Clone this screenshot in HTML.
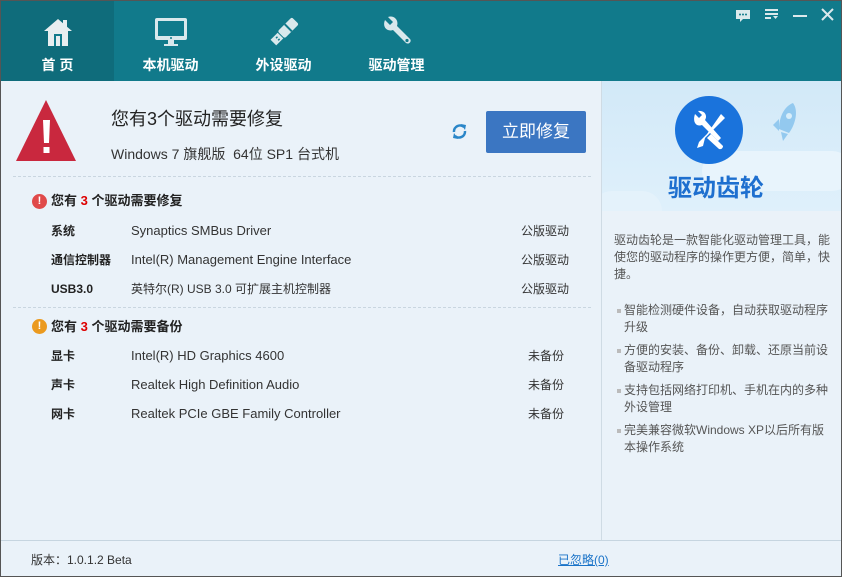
<!DOCTYPE html>
<html><head><meta charset="utf-8"><style>
*{margin:0;padding:0;box-sizing:border-box}
body{width:842px;height:577px;overflow:hidden;font-family:"Liberation Sans","Noto Sans CJK SC",sans-serif;background:#555}
#w{position:absolute;left:1px;top:1px;width:840px;height:575px;background:#eaf2f9;overflow:hidden}
#hd{position:absolute;left:0;top:0;width:840px;height:80px;background:#117a8b}
.tab{position:absolute;top:0;width:113px;height:80px;color:#fff;text-align:center;font-size:14px;font-weight:bold}
.tab span{position:absolute;left:0;right:0;top:54px}
.tab svg{position:absolute;left:50%;top:15px;transform:translateX(-50%)}
.a{position:absolute;white-space:nowrap}
.b{font-weight:bold;color:#222;line-height:18px}
.t{font-size:13px;color:#333;line-height:16px}
.l{font-size:12px;font-weight:bold;color:#222;line-height:16px}
.d{position:absolute;left:12px;width:578px;border-top:1px dashed #c9d6e0}
.r{font-size:12px;color:#555;line-height:17px}
.bl{position:absolute;left:616px;width:4px;height:4px;background:#bbb}
</style></head><body><div id="w">
<div id="hd">
 <div class="tab" style="left:0;background:#0f6c7b"><svg width="32" height="32" viewBox="0 0 32 32"><path d="M16 3 L2 15 H6 V30 H26 V15 H30 L25 10.7 V4 H21 V7.3 Z" fill="#e8eef0"/><rect x="12" y="18" width="8" height="12" fill="#117a8b"/><rect x="14" y="20" width="4" height="10" fill="#e8eef0"/></svg><span>首 页</span></div>
 <div class="tab" style="left:113px"><svg width="34" height="32" viewBox="0 0 34 32"><rect x="1" y="2" width="32" height="22" rx="2" fill="#d9e8ec"/><rect x="4" y="5" width="26" height="15" fill="#117a8b"/><circle cx="17" cy="22" r="1" fill="#117a8b"/><rect x="14" y="24" width="6" height="4" fill="#d9e8ec"/><rect x="10" y="28" width="14" height="2" fill="#d9e8ec"/></svg><span>本机驱动</span></div>
 <div class="tab" style="left:226px"><svg width="32" height="32" viewBox="0 0 32 32"><g transform="rotate(45 16 16)"><rect x="11" y="0" width="10" height="20" rx="2" fill="#d9e8ec"/><rect x="11" y="9" width="10" height="2" fill="#117a8b"/><rect x="12" y="21" width="8" height="10" fill="#d9e8ec"/><rect x="14" y="24" width="1.5" height="2" fill="#117a8b"/><rect x="17" y="24" width="1.5" height="2" fill="#117a8b"/></g></svg><span>外设驱动</span></div>
 <div class="tab" style="left:339px"><svg width="32" height="32" viewBox="0 0 32 32"><path d="M4 4 L9 9 L12 6 L7 1 C13 -1 18 4 16 10 L29 23 C31 25 28 29 25 27 L12 14 C6 16 1 11 4 4Z" fill="#d9e8ec"/><circle cx="26" cy="24.5" r="1.6" fill="#117a8b"/></svg><span>驱动管理</span></div>
 <svg class="a" style="left:734px;top:8px" width="16" height="14" viewBox="0 0 16 14"><path d="M1 1H15V10H8L5 13V10H1Z" fill="#dbe9ec"/><circle cx="5" cy="5.5" r="1" fill="#117a8b"/><circle cx="8" cy="5.5" r="1" fill="#117a8b"/><circle cx="11" cy="5.5" r="1" fill="#117a8b"/></svg>
 <svg class="a" style="left:764px;top:8px" width="14" height="12" viewBox="0 0 14 12"><rect x="0" y="0" width="13" height="2" fill="#dbe9ec"/><rect x="0" y="4" width="13" height="2" fill="#dbe9ec"/><rect x="0" y="8" width="6" height="2" fill="#dbe9ec"/><path d="M8 7H13L10.5 10Z" fill="#dbe9ec"/></svg>
 <div class="a" style="left:792px;top:14px;width:14px;height:2px;background:#dbe9ec"></div>
 <svg class="a" style="left:820px;top:7px" width="13" height="13" viewBox="0 0 13 13"><path d="M1 1L12 12M12 1L1 12" stroke="#dbe9ec" stroke-width="2"/></svg>
</div>
<svg class="a" style="left:14px;top:98px" width="62" height="62" viewBox="0 0 62 62"><path d="M31 1 L61 62 H1Z" fill="#c9283e"/><path d="M28 21H35L34 44H29Z" fill="#fff"/><rect x="28.5" y="48" width="6" height="6" fill="#fff"/></svg>
<div class="a" style="left:110px;top:104px;font-size:18px;color:#222">您有3个驱动需要修复</div>
<div class="a" style="left:110px;top:143px;font-size:14px;color:#333">Windows 7 旗舰版&nbsp; 64位 SP1 台式机</div>
<svg class="a" style="left:450px;top:122px" width="17" height="17" viewBox="0 0 17 17"><path d="M3 9A6 6 0 0 1 13 4" stroke="#2a86c8" stroke-width="2.5" fill="none"/><path d="M14 8A6 6 0 0 1 4 13" stroke="#2a86c8" stroke-width="2.5" fill="none"/><path d="M10 1L15 2L14 7Z" fill="#2a86c8"/><path d="M7 16L2 15L3 10Z" fill="#2a86c8"/></svg>
<div class="a" style="left:485px;top:110px;width:100px;height:42px;background:#3b76c2;border-radius:2px;color:#fff;font-size:17px;text-align:center;line-height:42px">立即修复</div>
<div class="d" style="top:175px"></div>
<div class="a" style="left:31px;top:193px;width:15px;height:15px;border-radius:50%;background:#e04a4a;color:#fff;font-size:11px;font-weight:bold;text-align:center;line-height:15px">!</div>
<div class="a b" style="left:50px;top:191px;font-size:13px">您有 <span style="color:#d00">3</span> 个驱动需要修复</div>
<div class="a l" style="left:50px;top:222px">系统</div><div class="a t" style="left:130px;top:222px">Synaptics SMBus Driver</div><div class="a t" style="left:520px;top:222px;font-size:12px">公版驱动</div>
<div class="a l" style="left:50px;top:251px">通信控制器</div><div class="a t" style="left:130px;top:251px">Intel(R) Management Engine Interface</div><div class="a t" style="left:520px;top:251px;font-size:12px">公版驱动</div>
<div class="a l" style="left:50px;top:280px">USB3.0</div><div class="a t" style="left:130px;top:280px;font-size:12px">英特尔(R) USB 3.0 可扩展主机控制器</div><div class="a t" style="left:520px;top:280px;font-size:12px">公版驱动</div>
<div class="d" style="top:306px"></div>
<div class="a" style="left:31px;top:318px;width:15px;height:15px;border-radius:50%;background:#eb9a1f;color:#fff;font-size:11px;font-weight:bold;text-align:center;line-height:15px">!</div>
<div class="a b" style="left:50px;top:317px;font-size:13px">您有 <span style="color:#d00">3</span> 个驱动需要备份</div>
<div class="a l" style="left:50px;top:347px">显卡</div><div class="a t" style="left:130px;top:347px">Intel(R) HD Graphics 4600</div><div class="a t" style="left:527px;top:347px;font-size:12px">未备份</div>
<div class="a l" style="left:50px;top:376px">声卡</div><div class="a t" style="left:130px;top:376px">Realtek High Definition Audio</div><div class="a t" style="left:527px;top:376px;font-size:12px">未备份</div>
<div class="a l" style="left:50px;top:405px">网卡</div><div class="a t" style="left:130px;top:405px">Realtek PCIe GBE Family Controller</div><div class="a t" style="left:527px;top:405px;font-size:12px">未备份</div>
<div class="a" style="left:600px;top:80px;width:1px;height:459px;background:#cfdbe4"></div>
<div class="a" style="left:601px;top:80px;width:239px;height:130px;background:linear-gradient(#d2e9f8,#dff0fb);overflow:hidden">
 <div class="a" style="left:100px;top:70px;width:150px;height:40px;border-radius:30px;background:#e8f4fc"></div>
 <div class="a" style="left:-10px;top:110px;width:70px;height:40px;border-radius:30px;background:#e4f2fb"></div>
 <svg class="a" style="left:155px;top:18px" width="45" height="50" viewBox="0 0 45 50"><path d="M36 4C42 12 38 26 32 34L22 30C22 20 26 8 36 4Z" fill="#93c9ef"/><circle cx="32" cy="17" r="3" fill="#d8eefa"/><path d="M16 26L22 20L22 32Z" fill="#93c9ef"/><path d="M24 33L26 42L31 35Z" fill="#93c9ef"/></svg>
 <div class="a" style="left:73px;top:15px;width:68px;height:68px;border-radius:50%;background:#1a73dc"></div>
 <svg class="a" style="left:85px;top:27px" width="44" height="44" viewBox="0 0 44 44"><path d="M8 6L12 10L15 7L11 3C17 2 21 7 18 12L34 30L31 33L15 17C10 19 5 15 8 6Z" fill="#fff"/><path d="M34 6L38 10L18 30L16 38L10 40L12 34L20 26Z" fill="#fff"/><path d="M24 26L36 38A3 3 0 0 1 32 41L20 30Z" fill="#fff"/></svg>
 <div class="a" style="left:66px;top:87px;font-size:24px;font-weight:bold;color:#1e6fcf">驱动齿轮</div>
</div>
<div class="a r" style="left:613px;top:231px;width:218px;white-space:normal">驱动齿轮是一款智能化驱动管理工具，能使您的驱动程序的操作更方便，简单，快捷。</div>
<div class="bl" style="top:308px"></div><div class="a r" style="left:623px;top:301px;width:210px;white-space:normal">智能检测硬件设备，自动获取驱动程序升级</div>
<div class="bl" style="top:348px"></div><div class="a r" style="left:623px;top:341px;width:210px;white-space:normal">方便的安装、备份、卸载、还原当前设备驱动程序</div>
<div class="bl" style="top:388px"></div><div class="a r" style="left:623px;top:381px;width:210px;white-space:normal">支持包括网络打印机、手机在内的多种外设管理</div>
<div class="bl" style="top:428px"></div><div class="a r" style="left:623px;top:421px;width:210px;white-space:normal">完美兼容微软Windows XP以后所有版本操作系统</div>
<div class="a" style="left:0;top:539px;width:840px;height:1px;background:#c6d5e0"></div>
<div class="a" style="left:30px;top:550px;font-size:12px;color:#333">版本：1.0.1.2 Beta</div>
<div class="a" style="left:557px;top:550px;font-size:12px;color:#1a73c8;text-decoration:underline">已忽略(0)</div>
</div></body></html>
